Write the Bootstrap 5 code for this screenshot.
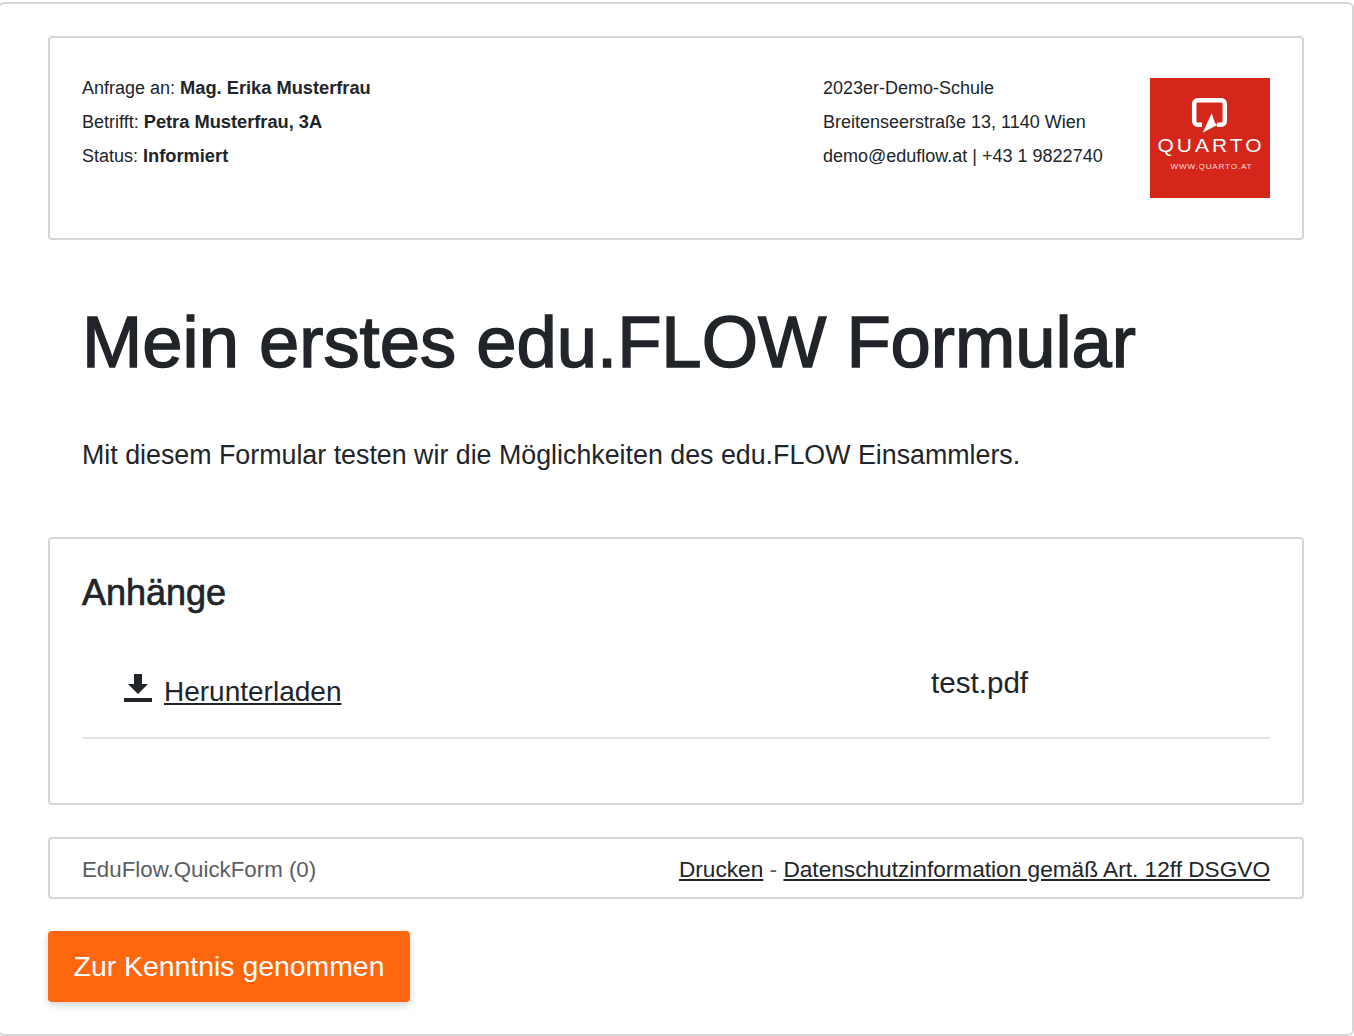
<!DOCTYPE html>
<html lang="de">

<head>
    <meta charset="UTF-8">
    <meta name="viewport" content="width=device-width, initial-scale=1.0">
    <title>Mein erstes edu.FLOW Formular</title>
    <link href="https://cdn.jsdelivr.net/npm/bootstrap@5.3.0/dist/css/bootstrap.min.css" rel="stylesheet">
    <style>
        body {
            font-family: "Liberation Sans", Arial, sans-serif;
            color: #212529;
            background: #fff;
            overflow: hidden;
        }

        .page-frame {
            width: 1356px;
            height: 1034px;
            margin: 2px 0 0 -2px;
            padding: 32px 48px 0 48px;
            border: 2px solid #d6d6d6;
            border-radius: 6px;
        }

        .box {
            border: 2px solid #d6d6d6;
            border-radius: 4px;
        }

        .head-box {
            height: 204px;
            padding: 33px 32px 31px;
            font-size: 18px;
            line-height: 34px;
        }

        .head-box b {
            font-size: 18.25px;
            font-weight: 700;
        }

        .school-info {
            width: 327px;
        }

        .quarto-logo {
            width: 120px;
            height: 120px;
            margin-top: 7px;
            display: block;
        }

        .form-title {
            font-size: 72.4px;
            line-height: 86px;
            font-weight: 400;
            -webkit-text-stroke: 1.5px #212529;
            margin: 59px 0 0 34px;
        }

        .form-intro {
            font-size: 26.8px;
            line-height: 40px;
            margin: 50px 0 0 34px;
        }

        .attach-box {
            height: 268px;
            margin-top: 62px;
            padding: 32px 32px 0;
        }

        .attach-title {
            font-size: 36px;
            line-height: 44px;
            font-weight: 400;
            -webkit-text-stroke: 0.7px #212529;
            margin: 0;
        }

        .attach-row {
            height: 95px;
            margin-top: 29px;
            border-bottom: 2px solid #e2e3e4;
            font-size: 28px;
        }

        .download-cell {
            width: 849px;
            padding: 27px 0 0 42px;
        }

        .dl-icon {
            margin-top: 3px;
        }

        .download-cell a,
        .foot-box a {
            color: #212529;
            text-decoration: underline;
        }

        .file-cell {
            padding-top: 17px;
            font-size: 29.6px;
        }

        .foot-box {
            height: 62px;
            margin-top: 32px;
            padding: 3px 32px 0;
            color: #5a5e62;
        }

        .foot-left {
            font-size: 22.3px;
        }

        .foot-right {
            font-size: 22.65px;
        }

        .ack-btn {
            margin-top: 32px;
            width: 362px;
            height: 71px;
            padding: 0;
            font-size: 28.4px;
            color: #fff;
            background: #ff670f;
            border: 0;
            border-radius: 4px;
            box-shadow: 0 3px 8px rgba(0, 0, 0, 0.18);
        }
    </style>
</head>

<body>
    <div class="page-frame">
        <!-- Kopf -->
        <div class="box head-box d-flex">
            <div class="flex-grow-1">
                <div>Anfrage an: <b>Mag. Erika Musterfrau</b></div>
                <div>Betrifft: <b>Petra Musterfrau, 3A</b></div>
                <div>Status: <b>Informiert</b></div>
            </div>
            <div class="school-info">
                <div>2023er-Demo-Schule</div>
                <div>Breitenseerstraße 13, 1140 Wien</div>
                <div>demo@eduflow.at | +43 1 9822740</div>
            </div>
            <svg class="quarto-logo" viewBox="0 0 120 120" role="img" aria-label="Quarto">
                <rect width="120" height="120" fill="#d4261b" />
                <path d="M52 46.800h-4.300a3.500 3.500 0 0 1-3.500-3.500V25.700a3.500 3.500 0 0 1 3.500-3.500h23.600a3.500 3.500 0 0 1 3.500 3.500v17.600a3.500 3.500 0 0 1-3.500 3.500h-4.300"
                    fill="none" stroke="#fff" stroke-width="4.500" />
                <path d="M61.700 35.300L52.700 54.700 67.300 47 65 45z" fill="#fff" />
                <text transform="translate(59.500 74) scale(1.200 1)" text-anchor="middle" fill="#fff"
                    font-family="Liberation Sans" font-size="17.500" textLength="86.700"
                    lengthAdjust="spacing">QUARTO</text>
                <text transform="translate(61 91) scale(1.200 1)" text-anchor="middle" fill="#fff" fill-opacity=".85"
                    font-family="Liberation Sans" font-size="6.800" textLength="67.500"
                    lengthAdjust="spacing">WWW.QUARTO.AT</text>
            </svg>
        </div>

        <h1 class="form-title">Mein erstes edu.FLOW Formular</h1>
        <p class="form-intro">Mit diesem Formular testen wir die Möglichkeiten des edu.FLOW Einsammlers.</p>

        <!-- Anhaenge -->
        <div class="box attach-box">
            <h2 class="attach-title">Anhänge</h2>
            <div class="attach-row d-flex">
                <div class="download-cell d-flex align-items-start gap-2">
                    <svg width="28" height="28" viewBox="0 0 28 28" class="dl-icon flex-shrink-0 me-1" aria-hidden="true">
                        <path d="M10 0h8v10h6L14 20 4 10h6z" fill="#212529" />
                        <rect y="24" width="28" height="4" fill="#212529" />
                    </svg>
                    <a href="#">Herunterladen</a>
                </div>
                <div class="file-cell">test.pdf</div>
            </div>
        </div>

        <!-- Fusszeile -->
        <div class="box foot-box d-flex justify-content-between align-items-center">
            <span class="foot-left">EduFlow.QuickForm (0)</span>
            <span class="foot-right"><a href="#">Drucken</a> - <a href="#">Datenschutzinformation gemäß Art. 12ff DSGVO</a></span>
        </div>

        <button type="button" class="btn ack-btn">Zur Kenntnis genommen</button>
    </div>

    <script src="https://cdn.jsdelivr.net/npm/bootstrap@5.3.0/dist/js/bootstrap.bundle.min.js"></script>
</body>

</html>
